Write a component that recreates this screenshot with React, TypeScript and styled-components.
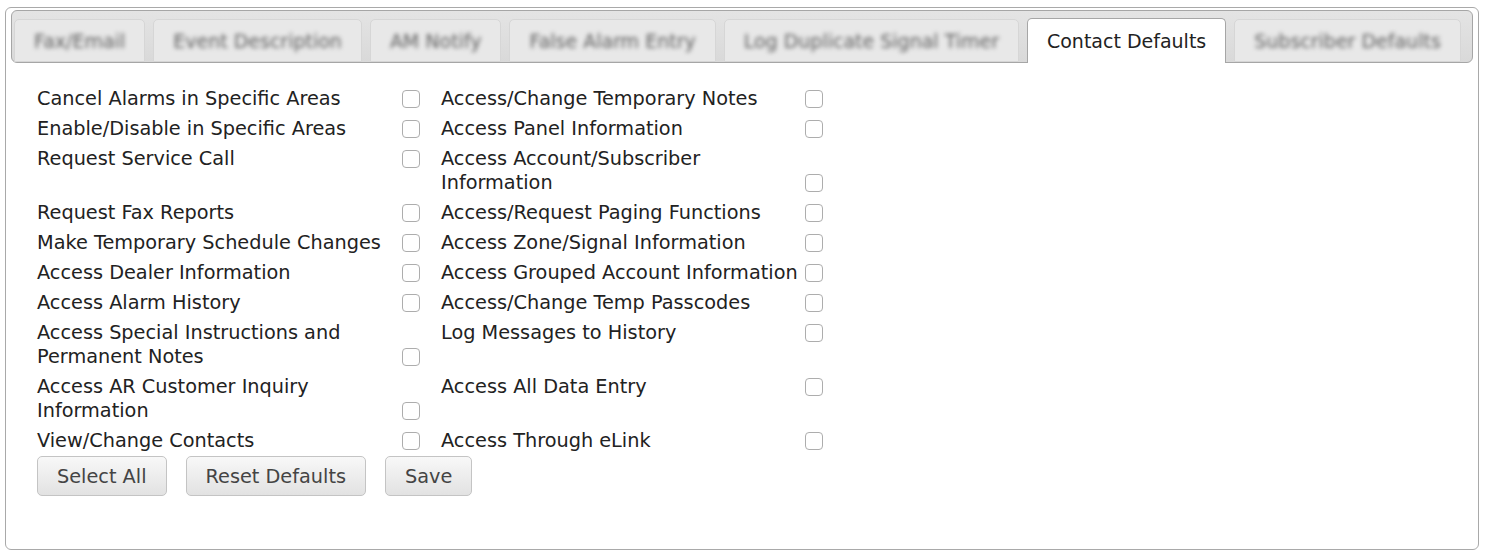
import React, { FC, useState } from "react";
import styled, { createGlobalStyle } from "styled-components";

const GlobalStyle = createGlobalStyle`
  body {
    margin: 0;
    background: #ffffff;
    font-family: "DejaVu Sans", Verdana, sans-serif;
  }
`;

const Panel = styled.div`
  box-sizing: border-box;
  width: 1474px;
  height: 543px;
  margin: 7px 0 0 5px;
  padding: 2px 5px;
  border: 1px solid #a9a9a9;
  border-radius: 6px;
  background: #ffffff;
`;

const TabBar = styled.div`
  display: flex;
  align-items: flex-end;
  gap: 8px;
  height: 53px;
  box-sizing: border-box;
  padding: 0 2px;
  border: 1px solid #a6a6a6;
  border-radius: 6px;
  background: linear-gradient(#e4e4e4, #d9d9d9);
`;

const Tab = styled.div<{ active?: boolean }>`
  box-sizing: border-box;
  height: ${({ active }) => (active ? "45px" : "43px")};
  margin-bottom: ${({ active }) => (active ? "-1px" : "0")};
  padding: 0 19px;
  display: flex;
  align-items: center;
  border: 1px solid ${({ active }) => (active ? "#a6a6a6" : "#d6d6d6")};
  border-bottom: ${({ active }) => (active ? "none" : "1px solid #d6d6d6")};
  border-radius: 5px 5px 0 0;
  background: ${({ active }) => (active ? "#ffffff" : "#e8e8e8")};
  font-size: 19px;
  color: ${({ active }) => (active ? "#222222" : "#5e5e5e")};
  white-space: nowrap;
  cursor: pointer;
`;

const TabText = styled.span<{ active?: boolean }>`
  filter: ${({ active }) => (active ? "none" : "blur(2px)")};
`;

const Content = styled.div`
  padding: 21px 26px 0;
`;

const Row = styled.div`
  display: flex;
  align-items: flex-start;
  padding: 3px 0;
`;

const Pair = styled.label`
  display: flex;
  align-items: flex-end;
`;

const Label = styled.span<{ wide: number }>`
  width: ${({ wide }) => wide}px;
  font-size: 19.3px;
  line-height: 24px;
  color: #222222;
`;

const Check = styled.input.attrs({ type: "checkbox" })`
  appearance: none;
  box-sizing: border-box;
  width: 18px;
  height: 18px;
  margin: 0 21px 3px 4px;
  border: 1px solid #adadad;
  border-radius: 4px;
  background: #ffffff;
  cursor: pointer;

  &:checked {
    background: #4a90d9;
    border-color: #3b7cc2;
  }
`;

const Buttons = styled.div`
  display: flex;
  gap: 19px;
`;

const Button = styled.button`
  height: 40px;
  padding: 0 19px;
  border: 1px solid #c4c4c4;
  border-radius: 5px;
  background: linear-gradient(#f8f8f8, #e2e2e2);
  font-family: "DejaVu Sans", Verdana, sans-serif;
  font-size: 19.3px;
  color: #444444;
  cursor: pointer;
`;

const tabs = [
  "Fax/Email",
  "Event Description",
  "AM Notify",
  "False Alarm Entry",
  "Log Duplicate Signal Timer",
  "Contact Defaults",
  "Subscriber Defaults",
];

const rows: [string, string][] = [
  ["Cancel Alarms in Specific Areas", "Access/Change Temporary Notes"],
  ["Enable/Disable in Specific Areas", "Access Panel Information"],
  ["Request Service Call", "Access Account/Subscriber Information"],
  ["Request Fax Reports", "Access/Request Paging Functions"],
  ["Make Temporary Schedule Changes", "Access Zone/Signal Information"],
  ["Access Dealer Information", "Access Grouped Account Information"],
  ["Access Alarm History", "Access/Change Temp Passcodes"],
  ["Access Special Instructions and Permanent Notes", "Log Messages to History"],
  ["Access AR Customer Inquiry Information", "Access All Data Entry"],
  ["View/Change Contacts", "Access Through eLink"],
];

const App: FC = () => {
  const [active, setActive] = useState("Contact Defaults");
  const [checked, setChecked] = useState<Record<string, boolean>>({});

  const toggle = (key: string) =>
    setChecked((prev) => ({ ...prev, [key]: !prev[key] }));

  return (
    <>
      <GlobalStyle />
      <Panel>
        <TabBar>
          {tabs.map((t) => (
            <Tab key={t} active={t === active} onClick={() => setActive(t)}>
              <TabText active={t === active}>{t}</TabText>
            </Tab>
          ))}
        </TabBar>

        <Content>
          {rows.map(([left, right]) => (
            <Row key={left}>
              <Pair>
                <Label wide={361}>{left}</Label>
                <Check checked={!!checked[left]} onChange={() => toggle(left)} />
              </Pair>
              <Pair>
                <Label wide={360}>{right}</Label>
                <Check checked={!!checked[right]} onChange={() => toggle(right)} />
              </Pair>
            </Row>
          ))}

          <Buttons>
            <Button
              onClick={() =>
                setChecked(
                  Object.fromEntries(rows.flat().map((k) => [k, true]))
                )
              }
            >
              Select All
            </Button>
            <Button onClick={() => setChecked({})}>Reset Defaults</Button>
            <Button>Save</Button>
          </Buttons>
        </Content>
      </Panel>
    </>
  );
};

export default App;
